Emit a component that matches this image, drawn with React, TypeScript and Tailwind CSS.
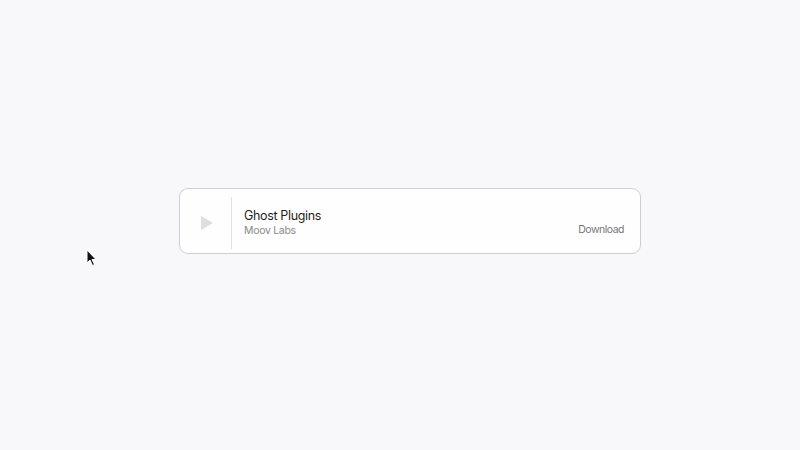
export default function App() {
  return (
    <div
      className="relative w-[800px] h-[450px] bg-[#f8f7f9] pt-[188px] pl-[179px]"
      style={{ fontFamily: 'Inter, "Noto Sans", sans-serif' }}
    >
      <div className="flex w-[462px] h-[66px] rounded-[9px] border border-[#cfcfd3] bg-[#fefeff]">
        <div className="flex w-[52px] items-center justify-center border-r border-[#e2e2e4] mt-[8px] mb-[4px]">
          <svg width="12" height="14" viewBox="0 0 12 14" className="ml-[2px]">
            <path d="M0 0 L12 7 L0 14 Z" fill="#dededf" />
          </svg>
        </div>
        <div className="flex flex-1 items-center justify-between pl-[12px] pr-[16px] pt-[3px]">
          <div className="flex flex-col">
            <span className="text-[12.5px] leading-[16px] tracking-[-0.35px] text-[#1e1e20]">Ghost Plugins</span>
            <span className="text-[10.5px] leading-[14px] tracking-[-0.3px] text-[#8a8a8a]">Moov Labs</span>
          </div>
          <span className="self-end mb-[16px] text-[10.5px] leading-[14px] tracking-[-0.5px] text-[#777777]">Download</span>
        </div>
      </div>
      <svg
        width="12"
        height="18"
        viewBox="0 0 12 18"
        className="absolute left-[86px] top-[249px]"
      >
        <path d="M1 1 L1 14 L4 11 L6.5 16.5 L8.5 15.5 L6 10.5 L10 10.5 Z" fill="#111" stroke="#fff" strokeWidth="1" />
      </svg>
    </div>
  )
}
